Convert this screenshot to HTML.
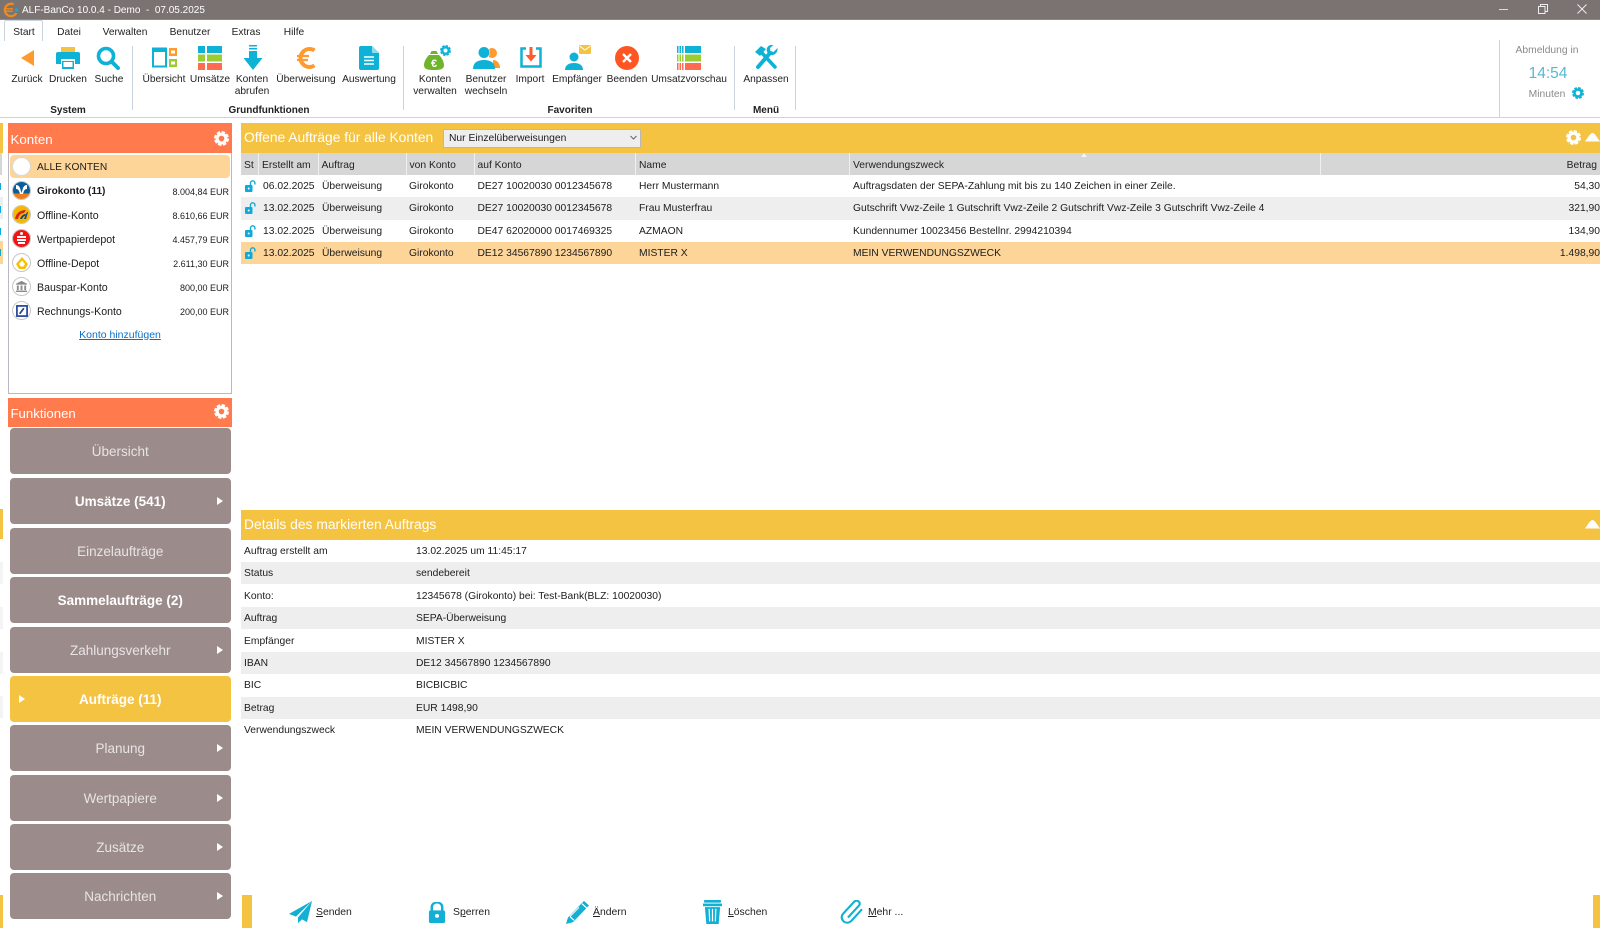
<!DOCTYPE html>
<html lang="de"><head><meta charset="utf-8"><title>ALF-BanCo</title>
<style>
html,body{margin:0;padding:0;width:1600px;height:930px;overflow:hidden;background:#fff}
body{font-family:"Liberation Sans",Arial,sans-serif;font-size:10.3px;color:#1c1c1c;position:relative}
div,span,svg{position:absolute}
u,b,i{position:static}
.t{white-space:nowrap}
.c{transform:translateX(-50%);text-align:center;white-space:nowrap}
.rb{font-size:10.2px;line-height:12px;color:#222}
.gl{font-size:10px;font-weight:bold;line-height:12px;color:#222}
.sep{width:1px;background:#c9d4df}
.m{font-size:10.2px;top:27px;line-height:12px;color:#222}
.hd{background:#f5c342;color:#fff}
.pt{color:#fff;white-space:nowrap}
.hc{top:153px;height:22px;line-height:25px;background:#d6d6d6;color:#222;font-size:10.3px;white-space:nowrap;padding-left:3px;box-sizing:border-box;border-right:1.5px solid #f0f0f0}
.row{left:241px;width:1359px;height:22.4px}
.cell{top:1px;line-height:22.4px;white-space:nowrap}
.ak{left:37px;line-height:14px;white-space:nowrap;font-size:10.6px}
.am{right:1371px;line-height:14px;white-space:nowrap;font-size:9px}
.fb{left:9.5px;width:221.5px;height:46px;border-radius:4px;background:#9c8b8b;color:#e8e4e4;font-size:13.5px;line-height:47px;text-align:center}
.fb b{color:#fff}
.ar{right:8px;top:19px;width:0;height:0;border-left:6px solid #fff;border-top:4px solid transparent;border-bottom:4px solid transparent}
.dl{left:244px;line-height:14px;white-space:nowrap}
.dv{left:416px;line-height:14px;white-space:nowrap}
.db{left:241px;width:1359px;height:22.4px;background:#eee}
.bt{top:906px;line-height:14px;font-size:10.4px;white-space:nowrap;color:#222}
.circ{left:12px;width:17px;height:17px;border-radius:50%;background:#fff;border:1.5px solid #c6c6c6}
.lk{left:245px;width:11px;height:12px}
.st{background:#f5c342;left:0;width:3px}
</style></head><body>
<svg width="0" height="0" style="left:0;top:0"><defs>
<symbol id="gear" viewBox="0 0 24 24"><circle cx="12" cy="12" r="7" fill="none" stroke="currentColor" stroke-width="5"/><circle cx="12" cy="12" r="10" fill="none" stroke="currentColor" stroke-width="4" stroke-dasharray="5.3 2.55"/></symbol>
<symbol id="lock" viewBox="0 0 11 12"><rect x="0" y="5" width="7.5" height="7" rx="1" fill="#11a9d6"/><path d="M5.5 5V3a2.2 2.2 0 0 1 4.4 0v1.5" fill="none" stroke="#11a9d6" stroke-width="1.4"/><circle cx="3.7" cy="8.5" r="1" fill="#fff"/></symbol>
</defs></svg>

<!-- title bar -->
<div style="left:0;top:0;width:1600px;height:19px;background:#7a7371;border-bottom:1px solid #8e8886"></div>
<svg style="left:3px;top:2px" width="16" height="16" viewBox="0 0 16 16"><circle cx="8" cy="8" r="6.2" fill="none" stroke="#f08a1c" stroke-width="2.2" stroke-dasharray="28 10" transform="rotate(35 8 8)"/><path d="M3 6.8h7M3 9.2h7" stroke="#f08a1c" stroke-width="1.4"/><circle cx="13.5" cy="8" r="1.8" fill="#17a8d0"/></svg>
<div class="t" style="left:22px;top:4px;line-height:14px;color:#fff;font-size:10px">ALF-BanCo 10.0.4 - Demo &nbsp;-&nbsp; 07.05.2025</div>
<div style="left:1499px;top:9px;width:9px;height:1px;background:#ddd"></div>
<svg style="left:1538px;top:4px" width="10" height="10" viewBox="0 0 10 10"><rect x=".5" y="2.5" width="6.5" height="7" fill="none" stroke="#eee"/><path d="M2.5 2.5V.5H9.5V7.5H7" fill="none" stroke="#eee"/></svg>
<svg style="left:1577px;top:4px" width="10" height="10" viewBox="0 0 10 10"><path d="M.5 .5l9 9M9.5 .5l-9 9" stroke="#eee"/></svg>

<!-- menu -->
<div style="left:4px;top:20px;width:39px;height:21px;border:1px solid #c9d4df;border-bottom:none;border-radius:2px 2px 0 0;box-sizing:border-box;background:#fff"></div>
<div class="m c" style="left:24px">Start</div><div class="m c" style="left:69px">Datei</div><div class="m c" style="left:125px">Verwalten</div><div class="m c" style="left:190px">Benutzer</div><div class="m c" style="left:246px">Extras</div><div class="m c" style="left:294px">Hilfe</div>

<!-- ribbon -->
<div style="left:0;top:116.5px;width:1600px;height:1px;background:#c9d4df"></div>
<svg style="left:20px;top:49px" width="15" height="18" viewBox="0 0 15 18"><path d="M14 1V17L1 9z" fill="#ff9a2e"/></svg>
<svg style="left:55px;top:46px" width="26" height="24" viewBox="0 0 26 24"><rect x="6" y="1" width="14" height="5" fill="#f5c342"/><path d="M3 6h20a2 2 0 0 1 2 2v10h-5v-5H6v5H1V8a2 2 0 0 1 2-2z" fill="#0db2d6"/><rect x="7" y="15" width="12" height="8" fill="#0db2d6"/><rect x="8.5" y="16" width="9" height="5" fill="#fff"/></svg>
<svg style="left:96px;top:46px" width="25" height="24" viewBox="0 0 25 24"><circle cx="10" cy="10" r="7.5" fill="none" stroke="#0db2d6" stroke-width="3.6"/><path d="M15.5 15.5l6.5 6.5" stroke="#0db2d6" stroke-width="4" stroke-linecap="round"/></svg>
<svg style="left:152px;top:47px" width="25" height="21" viewBox="0 0 25 21"><rect x="1" y="1.5" width="13" height="18" fill="#fff" stroke="#0db2d6" stroke-width="2"/><rect x="1" y="1" width="13" height="4" fill="#0db2d6"/><rect x="17" y="1" width="8" height="8" fill="#ff9a2e"/><rect x="19" y="3.5" width="4" height="3" fill="#fff"/><rect x="17" y="12" width="8" height="8" fill="#9ccc34"/><rect x="19" y="14.5" width="4" height="3" fill="#fff"/></svg>
<svg style="left:198px;top:46px" width="24" height="24" viewBox="0 0 24 24"><path d="M0 0h7v7H0zM9 0h15v7H9z" fill="#0db2d6"/><path d="M0 8.500h7v7H0zM9 8.500h15v7H9z" fill="#9ccc34"/><path d="M0 17h7v7H0zM9 17h15v7H9z" fill="#ff6a50"/></svg>
<svg style="left:243px;top:44px" width="20" height="27" viewBox="0 0 20 27"><path d="M6 1h8v1.500H6zM6 4h8v1.500H6zM6 7h8v7h5.500L10 26 .5 14H6z" fill="#0db2d6"/></svg>
<svg style="left:296px;top:46px" width="21" height="24" viewBox="0 0 21 24"><path d="M18.500 4.500A9 9 0 1 0 18.500 19.500" fill="none" stroke="#ff9a2e" stroke-width="4"/><path d="M1 10h12M1 14h11" stroke="#ff9a2e" stroke-width="2.200"/></svg>
<svg style="left:359px;top:46px" width="20" height="24" viewBox="0 0 20 24"><path d="M2 0h11l7 7v15a2 2 0 0 1-2 2H2a2 2 0 0 1-2-2V2a2 2 0 0 1 2-2z" fill="#0db2d6"/><path d="M13 0v7h7z" fill="#8fdcee"/><path d="M5 11h10M5 14.500h10M5 18h10" stroke="#fff" stroke-width="1.600"/></svg>
<svg style="left:424px;top:45px" width="27" height="26" viewBox="0 0 27 26"><path d="M6 9h8l-1.500-3h-5zM5 10h10c3 3 5 7 5 10 0 4-3 5-10 5S0 24 0 20c0-3 2-7 5-10z" fill="#6eb52b"/><text x="10" y="22" font-size="11" font-weight="bold" fill="#fff" text-anchor="middle" font-family="Liberation Sans">€</text><use href="#gear" x="16" y="0" width="11" height="11" style="color:#0db2d6"/></svg>
<svg style="left:473px;top:46px" width="27" height="24" viewBox="0 0 27 24"><circle cx="19" cy="7" r="5" fill="#ff9a2e"/><path d="M20 14c4 0 7 3 7 8h-7z" fill="#ff9a2e"/><circle cx="11" cy="6.500" r="6" fill="#fff"/><circle cx="11" cy="6.500" r="5.500" fill="#0db2d6"/><path d="M0 23c0-6 4-9 11-9s11 3 11 9z" fill="#0db2d6"/></svg>
<svg style="left:520px;top:47px" width="22" height="21" viewBox="0 0 22 21"><path d="M6 1.500H1.500v18h19v-18H16" fill="none" stroke="#0db2d6" stroke-width="2.500"/><path d="M9.500 0h3v8h4l-5.500 6.500L5.500 8h4z" fill="#ff5a2e"/></svg>
<svg style="left:565px;top:45px" width="26" height="25" viewBox="0 0 26 25"><rect x="14" y="0" width="12" height="9" rx="1" fill="#f5c342"/><path d="M14.500 1l5.500 4 5.500-4" stroke="#fff" fill="none"/><circle cx="9" cy="12" r="4.500" fill="#0db2d6"/><path d="M0 25c0-5 4-7 9-7s9 2 9 7z" fill="#0db2d6"/></svg>
<svg style="left:615px;top:46px" width="24" height="24" viewBox="0 0 24 24"><circle cx="12" cy="12" r="12" fill="#ff5522"/><path d="M8 8l8 8M16 8l-8 8" stroke="#fff" stroke-width="2.400"/></svg>
<svg style="left:677px;top:46px" width="24" height="24" viewBox="0 0 24 24"><path d="M0 0h1.500v7H0zM2.500 0H4v7H2.500zM5 0h1.500v7H5zM8 0h16v7H8z" fill="#0db2d6"/><path d="M0 8.500h1.500v7H0zM2.500 8.500H4v7H2.500zM5 8.500h1.500v7H5zM8 8.500h16v7H8z" fill="#9ccc34"/><path d="M0 17h1.500v7H0zM2.500 17H4v7H2.500zM5 17h1.500v7H5zM8 17h16v7H8z" fill="#ff6a50"/></svg>
<svg style="left:754px;top:45px" width="24" height="25" viewBox="0 0 24 25"><path d="M4 22L16 8" stroke="#0db2d6" stroke-width="4" stroke-linecap="round"/><path d="M23.500 3l-4 4-3-1-.5-3 3.500-3c-4-1-8 2-6.500 7l3 3c5 1 8-3 7.500-7z" fill="#0db2d6"/><path d="M21 22L8 8" stroke="#0db2d6" stroke-width="3.500" stroke-linecap="round"/><path d="M1 7l6-6 5 3-6 7z" fill="#0db2d6"/></svg>

<div class="rb c" style="left:27px;top:74px">Zurück</div><div class="rb c" style="left:68px;top:74px">Drucken</div><div class="rb c" style="left:109px;top:74px">Suche</div>
<div class="rb c" style="left:164px;top:74px">Übersicht</div><div class="rb c" style="left:210px;top:74px">Umsätze</div><div class="rb c" style="left:252px;top:74px">Konten<br>abrufen</div><div class="rb c" style="left:306px;top:74px">Überweisung</div><div class="rb c" style="left:369px;top:74px">Auswertung</div>
<div class="rb c" style="left:435px;top:74px">Konten<br>verwalten</div><div class="rb c" style="left:486px;top:74px">Benutzer<br>wechseln</div><div class="rb c" style="left:530px;top:74px">Import</div><div class="rb c" style="left:577px;top:74px">Empfänger</div><div class="rb c" style="left:627px;top:74px">Beenden</div><div class="rb c" style="left:689px;top:74px">Umsatzvorschau</div><div class="rb c" style="left:766px;top:74px">Anpassen</div>
<div class="gl c" style="left:68px;top:105px">System</div><div class="gl c" style="left:269px;top:105px">Grundfunktionen</div><div class="gl c" style="left:570px;top:105px">Favoriten</div><div class="gl c" style="left:766px;top:105px">Menü</div>
<div class="sep" style="left:132px;top:46px;height:64px"></div><div class="sep" style="left:403px;top:46px;height:64px"></div><div class="sep" style="left:734px;top:46px;height:64px"></div><div class="sep" style="left:795px;top:46px;height:64px"></div><div class="sep" style="left:1499px;top:40px;height:77px"></div>
<div class="c" style="left:1547px;top:44px;line-height:14px;color:#8a8a8a;font-size:10.3px">Abmeldung in</div>
<div class="c" style="left:1548px;top:65px;line-height:18px;color:#55b9d6;font-size:15.5px">14:54</div>
<div class="c" style="left:1547px;top:87.5px;line-height:14px;color:#8a8a8a;font-size:10.3px">Minuten</div>
<svg style="left:1572px;top:87px;color:#0db2d6" width="12" height="12"><use href="#gear" width="12" height="12"/></svg>

<!-- left strip -->
<div class="st" style="top:123px;height:30px"></div><div style="left:0;top:153px;width:2px;height:22px;background:#d6d6d6"></div>
<div style="left:0;top:183px;width:1px;height:7px;background:#11a9d6"></div><div style="left:0;top:197px;width:3px;height:22px;background:#eee"></div><div style="left:0;top:206px;width:1px;height:7px;background:#11a9d6"></div><div style="left:0;top:228px;width:1px;height:7px;background:#11a9d6"></div><div style="left:0;top:241px;width:3px;height:23px;background:#fdd599"></div><div style="left:0;top:249px;width:1px;height:7px;background:#11a9d6"></div>
<div class="st" style="top:509px;height:30px"></div><div style="left:0;top:562px;width:3px;height:22px;background:#f4f4f4"></div><div style="left:0;top:607px;width:3px;height:22px;background:#f4f4f4"></div><div style="left:0;top:652px;width:3px;height:22px;background:#f4f4f4"></div><div style="left:0;top:696px;width:3px;height:22px;background:#f4f4f4"></div>
<div class="st" style="top:895px;height:33px"></div>

<!-- Konten -->
<div style="left:8px;top:153px;width:224px;height:241px;border:1px solid #b9b9c6;border-top:none;box-sizing:border-box"></div>
<div style="left:8px;top:123px;width:224px;height:30px;background:#ff7a4d"></div>
<div class="pt" style="left:10.5px;top:132px;font-size:13.3px;line-height:16px">Konten</div>
<svg style="left:214px;top:131px;color:#fff" width="15" height="15"><use href="#gear" width="15" height="15"/></svg>
<div style="left:10px;top:155px;width:220px;height:23px;border-radius:4px;background:#fdd599"></div>
<div class="circ" style="top:156.5px;background:#fff;border-color:#d8d8d8"></div>
<div class="ak" style="top:161px;font-size:10.2px">ALLE KONTEN</div>
<div class="circ" style="top:181px"><div style="left:0;top:0;width:17px;height:17px;border-radius:50%;background:linear-gradient(#0a5e9e 0 68%,#f07d18 68%)"></div><svg style="left:2px;top:2px" width="13" height="10" viewBox="0 0 13 10"><path d="M1 1c2 0 3 1 4 3l1.500 5 1.500-5c1-2 2-3 4-3v4c-2 0-3 1-4 5H5C4 6 3 5 1 5z" fill="#fff"/></svg></div>
<div class="ak" style="top:185px;font-weight:bold;font-size:10.1px">Girokonto (11)</div><div class="am" style="top:185px">8.004,84 EUR</div>
<div class="circ" style="top:205px"><div style="left:0;top:0;width:17px;height:17px;border-radius:50%;background:#f5b800"></div><svg style="left:1px;top:2px" width="15" height="12" viewBox="0 0 15 12"><path d="M1 11c1-6 5-9 11-9l-2 3c-3 0-5 2-6 6z" fill="#d8261c"/><path d="M6 11c1-3 3-5 6-5l-1 2c-1 0-2 1-3 3z" fill="#14408e"/><path d="M10 11l3-7 1 0-2 7z" fill="#14408e"/></svg></div>
<div class="ak" style="top:209px">Offline-Konto</div><div class="am" style="top:209px">8.610,66 EUR</div>
<div class="circ" style="top:229px"><div style="left:0;top:0;width:17px;height:17px;border-radius:50%;background:#f01414"></div><div style="left:7px;top:2px;width:3px;height:3px;border-radius:50%;background:#fff"></div><div style="left:4px;top:6px;width:9px;height:2px;background:#fff"></div><div style="left:4px;top:9px;width:9px;height:2px;background:#fff"></div><div style="left:5px;top:12px;width:7px;height:2px;background:#fff"></div></div>
<div class="ak" style="top:233px">Wertpapierdepot</div><div class="am" style="top:233px">4.457,79 EUR</div>
<div class="circ" style="top:253px"><svg style="left:1.5px;top:1.5px" width="14" height="14" viewBox="0 0 14 14"><path d="M7 1l6 7-3 5H4L1 8z" fill="#f5c000"/><path d="M7 4.500l3 3.500-1.500 2.500h-3L4 8z" fill="#fff"/></svg></div>
<div class="ak" style="top:257px">Offline-Depot</div><div class="am" style="top:257px">2.611,30 EUR</div>
<div class="circ" style="top:277px"><svg style="left:2px;top:2px" width="13" height="12" viewBox="0 0 14 13"><path d="M7 1l6 3v1H1V4zM2 6h2v5H2zM6 6h2v5H6zM10 6h2v5h-2zM1 11.500h12V13H1z" fill="#8a8a8a"/></svg></div>
<div class="ak" style="top:281px">Bauspar-Konto</div><div class="am" style="top:281px">800,00 EUR</div>
<div class="circ" style="top:301px"><svg style="left:2.5px;top:2.5px" width="12" height="12" viewBox="0 0 13 13"><rect x="1" y="1" width="11" height="11" fill="#fff" stroke="#1a3f94" stroke-width="1.800"/><path d="M4 9.500L8.500 3.500" stroke="#1a3f94" stroke-width="1.800"/></svg></div>
<div class="ak" style="top:305px">Rechnungs-Konto</div><div class="am" style="top:305px">200,00 EUR</div>
<div class="c" style="left:120px;top:327.5px;line-height:14px;color:#0a6fc8;text-decoration:underline;font-size:10.5px">Konto hinzufügen</div>

<!-- Funktionen -->
<div style="left:8px;top:397.5px;width:224px;height:29px;background:#ff7a4d"></div>
<div class="pt" style="left:10.5px;top:405.5px;font-size:13.2px;line-height:16px">Funktionen</div>
<svg style="left:214px;top:404px;color:#fff" width="15" height="15"><use href="#gear" width="15" height="15"/></svg>
<div class="fb" style="top:428px">Übersicht</div>
<div class="fb" style="top:478px"><b>Umsätze (541)</b><span class="ar"></span></div>
<div class="fb" style="top:527.5px">Einzelaufträge</div>
<div class="fb" style="top:577px"><b>Sammelaufträge (2)</b></div>
<div class="fb" style="top:626.5px">Zahlungsverkehr<span class="ar"></span></div>
<div class="fb" style="top:676px;background:#f5c342"><b>Aufträge (11)</b><span class="ar" style="right:auto;left:9px"></span></div>
<div class="fb" style="top:725px">Planung<span class="ar"></span></div>
<div class="fb" style="top:775px">Wertpapiere<span class="ar"></span></div>
<div class="fb" style="top:824px">Zusätze<span class="ar"></span></div>
<div class="fb" style="top:873px">Nachrichten<span class="ar"></span></div>

<!-- Aufträge header -->
<div class="hd" style="left:241px;top:123px;width:1359px;height:30px"></div>
<div class="pt" style="left:244px;top:130px;font-size:13.8px;line-height:16px">Offene Aufträge für alle Konten</div>
<div style="left:443px;top:128.5px;width:198px;height:19px;background:#eee;border:1px solid #b8b8b8;box-sizing:border-box"></div>
<div class="t" style="left:449px;top:132px;line-height:14px;font-size:10.3px">Nur Einzelüberweisungen</div>
<svg style="left:630px;top:135px" width="7" height="5" viewBox="0 0 7 5"><path d="M.5 1l3 3 3-3" fill="none" stroke="#666"/></svg>
<svg style="left:1566px;top:130px;color:#fff" width="15" height="15"><use href="#gear" width="15" height="15"/></svg>
<svg style="left:1585px;top:132px" width="15" height="10" viewBox="0 0 15 10"><path d="M0 9.500C2 7 5 1 7.500 1S13 7 15 9.500z" fill="#fff"/></svg>

<!-- table -->
<div class="hc" style="left:241px;width:17.5px">St</div>
<div class="hc" style="left:259px;width:59.5px">Erstellt am</div>
<div class="hc" style="left:318.5px;width:88px">Auftrag</div>
<div class="hc" style="left:406.5px;width:68px">von Konto</div>
<div class="hc" style="left:474.5px;width:161.5px">auf Konto</div>
<div class="hc" style="left:636px;width:214px">Name</div>
<div class="hc" style="left:850px;width:471px">Verwendungszweck</div>
<div class="hc" style="left:1321px;width:279px;border:none;text-align:right;padding-right:3px">Betrag</div>
<svg style="left:1081px;top:153px" width="6" height="4"><path d="M0 4L3 0l3 4z" fill="#f4f4f4"/></svg>

<div class="row" style="top:175px"><span class="cell" style="left:22px">06.02.2025</span><span class="cell" style="left:81px">Überweisung</span><span class="cell" style="left:168px">Girokonto</span><span class="cell" style="left:236.5px">DE27 10020030 0012345678</span><span class="cell" style="left:398px">Herr Mustermann</span><span class="cell" style="left:612px">Auftragsdaten der SEPA-Zahlung mit bis zu 140 Zeichen in einer Zeile.</span><span class="cell" style="right:0">54,30</span></div>
<div class="row" style="top:197.4px;background:#eee"><span class="cell" style="left:22px">13.02.2025</span><span class="cell" style="left:81px">Überweisung</span><span class="cell" style="left:168px">Girokonto</span><span class="cell" style="left:236.5px">DE27 10020030 0012345678</span><span class="cell" style="left:398px">Frau Musterfrau</span><span class="cell" style="left:612px">Gutschrift Vwz-Zeile 1 Gutschrift Vwz-Zeile 2 Gutschrift Vwz-Zeile 3 Gutschrift Vwz-Zeile 4</span><span class="cell" style="right:0">321,90</span></div>
<div class="row" style="top:219.8px"><span class="cell" style="left:22px">13.02.2025</span><span class="cell" style="left:81px">Überweisung</span><span class="cell" style="left:168px">Girokonto</span><span class="cell" style="left:236.5px">DE47 62020000 0017469325</span><span class="cell" style="left:398px">AZMAON</span><span class="cell" style="left:612px">Kundennumer 10023456 Bestellnr. 2994210394</span><span class="cell" style="right:0">134,90</span></div>
<div class="row" style="top:242px;background:#fdd599"><span class="cell" style="left:22px">13.02.2025</span><span class="cell" style="left:81px">Überweisung</span><span class="cell" style="left:168px">Girokonto</span><span class="cell" style="left:236.5px">DE12 34567890 1234567890</span><span class="cell" style="left:398px">MISTER X</span><span class="cell" style="left:612px">MEIN VERWENDUNGSZWECK</span><span class="cell" style="right:0">1.498,90</span></div>
<svg class="lk" style="top:180px"><use href="#lock" width="11" height="12"/></svg>
<svg class="lk" style="top:202px"><use href="#lock" width="11" height="12"/></svg>
<svg class="lk" style="top:224.5px"><use href="#lock" width="11" height="12"/></svg>
<svg class="lk" style="top:247px"><use href="#lock" width="11" height="12"/></svg>

<!-- details -->
<div class="hd" style="left:241px;top:510px;width:1359px;height:29.5px"></div>
<div class="pt" style="left:244px;top:516px;font-size:13.85px;line-height:16px">Details des markierten Auftrags</div>
<svg style="left:1585px;top:519px" width="15" height="10" viewBox="0 0 15 10"><path d="M0 9.500C2 7 5 1 7.500 1S13 7 15 9.500z" fill="#fff"/></svg>
<div class="db" style="top:562px"></div><div class="db" style="top:607px"></div><div class="db" style="top:652px"></div><div class="db" style="top:696.5px"></div>
<div class="dl" style="top:544.5px">Auftrag erstellt am</div><div class="dv" style="top:544.5px">13.02.2025 um 11:45:17</div>
<div class="dl" style="top:567px">Status</div><div class="dv" style="top:567px">sendebereit</div>
<div class="dl" style="top:589.5px">Konto:</div><div class="dv" style="top:589.5px">12345678 (Girokonto) bei: Test-Bank(BLZ: 10020030)</div>
<div class="dl" style="top:612px">Auftrag</div><div class="dv" style="top:612px">SEPA-Überweisung</div>
<div class="dl" style="top:634.5px">Empfänger</div><div class="dv" style="top:634.5px">MISTER X</div>
<div class="dl" style="top:657px">IBAN</div><div class="dv" style="top:657px">DE12 34567890 1234567890</div>
<div class="dl" style="top:679px">BIC</div><div class="dv" style="top:679px">BICBICBIC</div>
<div class="dl" style="top:701.5px">Betrag</div><div class="dv" style="top:701.5px">EUR 1498,90</div>
<div class="dl" style="top:724px">Verwendungszweck</div><div class="dv" style="top:724px">MEIN VERWENDUNGSZWECK</div>

<!-- bottom toolbar -->
<div style="left:241.5px;top:895px;width:10px;height:33px;background:#f5c342"></div>
<div style="left:1593px;top:895px;width:7px;height:33px;background:#f5c342"></div>
<svg style="left:289px;top:901px" width="23" height="23" viewBox="0 0 23 25" preserveAspectRatio="none"><path d="M23 0L0 14l7 3zM23 0L9 18l0 6 4-4 5 3z" fill="#11b0d4"/></svg>
<svg style="left:428px;top:902px" width="18" height="21" viewBox="0 0 19 25" preserveAspectRatio="none"><path d="M4 11V6a5.500 5.500 0 0 1 11 0v5" fill="none" stroke="#11b0d4" stroke-width="2.600"/><rect x="1" y="10" width="17" height="15" rx="2" fill="#11b0d4"/><circle cx="9.500" cy="16.500" r="2.200" fill="#fff"/></svg>
<svg style="left:566px;top:900px" width="24" height="24" viewBox="0 0 24 26" preserveAspectRatio="none"><path d="M18 1l5 5L7 24 0 26l2-7z" fill="#11b0d4"/><path d="M16 4l5 5M4 18l4 4" stroke="#fff" stroke-width="1.200"/><path d="M13 8L4 18" stroke="#fff" stroke-width="1"/></svg>
<svg style="left:703px;top:900px" width="19" height="24" viewBox="0 0 20 27" preserveAspectRatio="none"><rect x="1" y="0" width="18" height="3" rx="1" fill="#11b0d4"/><rect x="0" y="4" width="20" height="3" fill="#11b0d4"/><path d="M2 8h16l-1.500 19h-13z" fill="#11b0d4"/><path d="M6.500 10l.5 14M10 10v14M13.500 10l-.5 14" stroke="#fff" stroke-width="1.300"/></svg>
<svg style="left:840px;top:900px" width="24" height="24" viewBox="0 0 24 26" preserveAspectRatio="none"><path d="M8 18L19 5a3 3 0 0 0-5-4L3 14c-4 5 2 13 8 8L22 9" fill="none" stroke="#11b0d4" stroke-width="2.200" transform="translate(0 1)"/></svg>
<div class="bt" style="left:316px"><u>S</u>enden</div>
<div class="bt" style="left:453px">S<u>p</u>erren</div>
<div class="bt" style="left:593px"><u>Ä</u>ndern</div>
<div class="bt" style="left:728px"><u>L</u>öschen</div>
<div class="bt" style="left:868px"><u>M</u>ehr ...</div>
</body></html>
